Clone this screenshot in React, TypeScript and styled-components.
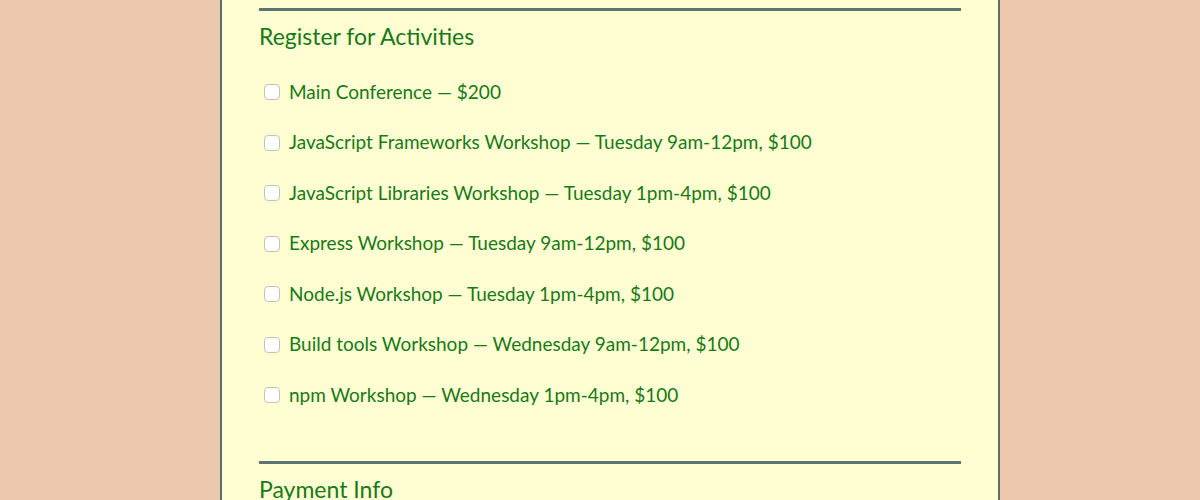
import React from "react";
import styled, { createGlobalStyle } from "styled-components";

const Global = createGlobalStyle`
  html, body { margin: 0; padding: 0; background: #ebc8ae; height: 500px; overflow: hidden; }
  body { font-family: "Lato", "Noto Sans", sans-serif; }
`;

const Panel = styled.form`
  margin-left: 220px;
  width: 780px;
  height: 500px;
  background: #fffdd2;
  border-left: 2px solid #57716f;
  border-right: 2px solid #57716f;
  padding: 8px 37px 0;
  box-sizing: border-box;
  overflow: hidden;
`;

const Section = styled.fieldset`
  border: none;
  border-top: 3px solid #5b7474;
  margin: 0;
  padding: 0;
`;

const Heading = styled.h2`
  margin: 0;
  padding: 10px 0 0;
  font-family: "Lato", "Noto Sans", sans-serif;
  font-weight: 400;
  font-size: 23px;
  line-height: 30px;
  color: #177a17;
`;

const List = styled.div`
  display: flex;
  flex-direction: column;
  padding-top: 15px;
  padding-bottom: 41px;
`;

const Row = styled.label`
  display: flex;
  align-items: center;
  height: 50.5px;
  gap: 9px;
  padding-left: 5px;
  font-size: 19px;
  color: #177a17;
`;

const Box = styled.span`
  width: 14px;
  height: 14px;
  border: 1px solid #c2c2b8;
  border-radius: 4px;
  background: #ffffff;
  flex: none;
  margin-top: 2px;
`;

const activities = [
  "Main Conference — $200",
  "JavaScript Frameworks Workshop — Tuesday 9am-12pm, $100",
  "JavaScript Libraries Workshop — Tuesday 1pm-4pm, $100",
  "Express Workshop — Tuesday 9am-12pm, $100",
  "Node.js Workshop — Tuesday 1pm-4pm, $100",
  "Build tools Workshop — Wednesday 9am-12pm, $100",
  "npm Workshop — Wednesday 1pm-4pm, $100",
];

export default function App() {
  return (
    <>
      <Global />
      <Panel>
        <Section>
          <Heading>Register for Activities</Heading>
          <List>
            {activities.map((a) => (
              <Row key={a}>
                <Box />
                <span>{a}</span>
              </Row>
            ))}
          </List>
        </Section>
        <Section>
          <Heading>Payment Info</Heading>
        </Section>
      </Panel>
    </>
  );
}
